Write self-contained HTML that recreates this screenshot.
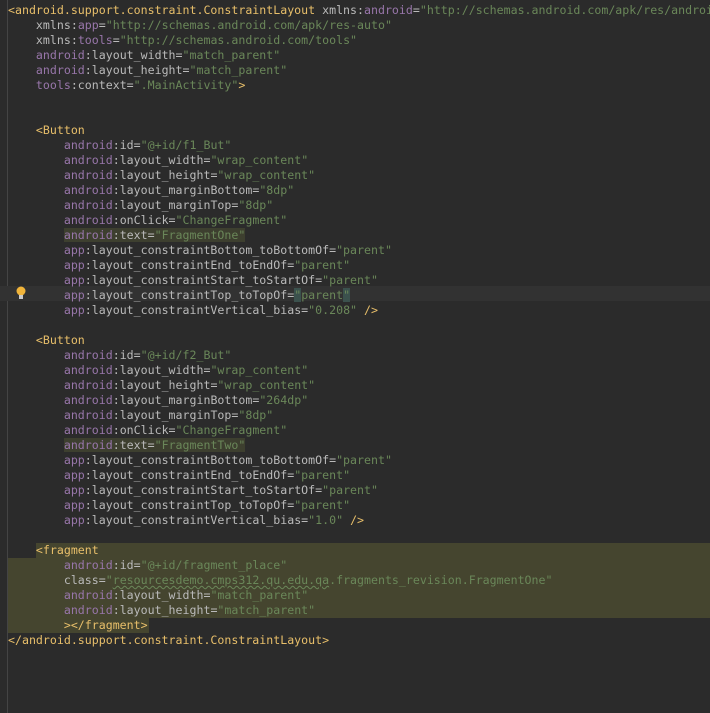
<!DOCTYPE html>
<html><head><meta charset="utf-8"><style>
html,body{margin:0;padding:0;background:#2b2b2b;width:710px;height:713px;overflow:hidden;position:relative}
.l{position:absolute;left:8px;height:15px;line-height:15px;font-family:"DejaVu Sans Mono","Liberation Mono",monospace;font-size:11.6px;color:#bababa;white-space:pre}
.t{color:#e8bf6a}.n{color:#9876aa}.v{color:#6a8759}
.hl{background:#3d3f2f}
.sq{text-decoration:underline wavy #6a8759;text-decoration-thickness:1px}
</style></head><body>
<div style="position:absolute;left:7px;top:0;width:1px;height:713px;background:#444"></div>
<div style="position:absolute;left:0;top:286px;width:710px;height:15px;background:#323232"></div>
<div style="position:absolute;left:36px;top:543px;width:674px;height:15px;background:#45452f"></div>
<div style="position:absolute;left:8px;top:558px;width:702px;height:60px;background:#45452f"></div>
<div style="position:absolute;left:8px;top:618px;width:141px;height:15px;background:#45452f"></div>
<div style="position:absolute;left:16px;top:286px;width:10px;height:14px;"><svg width="10" height="14"><circle cx="5" cy="5" r="4.5" fill="#f0b43a"/><rect x="3" y="9" width="4" height="4" fill="#c9c9c9"/></svg></div>
<div class="l" style="top:3px"><span class="t">&lt;android.support.constraint.ConstraintLayout </span>xmlns:<span class="n">android</span>=<span class="v">"http://schemas.android.com/apk/res/android"</span></div>
<div class="l" style="top:18px">    xmlns:<span class="n">app</span>=<span class="v">"http://schemas.android.com/apk/res-auto"</span></div>
<div class="l" style="top:33px">    xmlns:<span class="n">tools</span>=<span class="v">"http://schemas.android.com/tools"</span></div>
<div class="l" style="top:48px">    <span class="n">android</span>:layout_width=<span class="v">"match_parent"</span></div>
<div class="l" style="top:63px">    <span class="n">android</span>:layout_height=<span class="v">"match_parent"</span></div>
<div class="l" style="top:78px">    <span class="n">tools</span>:context=<span class="v">".MainActivity"</span><span class="t">&gt;</span></div>
<div class="l" style="top:123px">    <span class="t">&lt;Button</span></div>
<div class="l" style="top:138px">        <span class="n">android</span>:id=<span class="v">"@+id/f1_But"</span></div>
<div class="l" style="top:153px">        <span class="n">android</span>:layout_width=<span class="v">"wrap_content"</span></div>
<div class="l" style="top:168px">        <span class="n">android</span>:layout_height=<span class="v">"wrap_content"</span></div>
<div class="l" style="top:183px">        <span class="n">android</span>:layout_marginBottom=<span class="v">"8dp"</span></div>
<div class="l" style="top:198px">        <span class="n">android</span>:layout_marginTop=<span class="v">"8dp"</span></div>
<div class="l" style="top:213px">        <span class="n">android</span>:onClick=<span class="v">"ChangeFragment"</span></div>
<div class="l" style="top:228px">        <span class="hl"><span class="n">android</span>:text=<span class="v">"FragmentOne"</span></span></div>
<div class="l" style="top:243px">        <span class="n">app</span>:layout_constraintBottom_toBottomOf=<span class="v">"parent"</span></div>
<div class="l" style="top:258px">        <span class="n">app</span>:layout_constraintEnd_toEndOf=<span class="v">"parent"</span></div>
<div class="l" style="top:273px">        <span class="n">app</span>:layout_constraintStart_toStartOf=<span class="v">"parent"</span></div>
<div class="l" style="top:288px">        <span class="n">app</span>:layout_constraintTop_toTopOf=<span class="v"><span style="background:#3b514d">"</span>parent<span style="background:#3b514d">"</span></span></div>
<div class="l" style="top:303px">        <span class="n">app</span>:layout_constraintVertical_bias=<span class="v">"0.208"</span> <span class="t">/&gt;</span></div>
<div class="l" style="top:333px">    <span class="t">&lt;Button</span></div>
<div class="l" style="top:348px">        <span class="n">android</span>:id=<span class="v">"@+id/f2_But"</span></div>
<div class="l" style="top:363px">        <span class="n">android</span>:layout_width=<span class="v">"wrap_content"</span></div>
<div class="l" style="top:378px">        <span class="n">android</span>:layout_height=<span class="v">"wrap_content"</span></div>
<div class="l" style="top:393px">        <span class="n">android</span>:layout_marginBottom=<span class="v">"264dp"</span></div>
<div class="l" style="top:408px">        <span class="n">android</span>:layout_marginTop=<span class="v">"8dp"</span></div>
<div class="l" style="top:423px">        <span class="n">android</span>:onClick=<span class="v">"ChangeFragment"</span></div>
<div class="l" style="top:438px">        <span class="hl"><span class="n">android</span>:text=<span class="v">"FragmentTwo"</span></span></div>
<div class="l" style="top:453px">        <span class="n">app</span>:layout_constraintBottom_toBottomOf=<span class="v">"parent"</span></div>
<div class="l" style="top:468px">        <span class="n">app</span>:layout_constraintEnd_toEndOf=<span class="v">"parent"</span></div>
<div class="l" style="top:483px">        <span class="n">app</span>:layout_constraintStart_toStartOf=<span class="v">"parent"</span></div>
<div class="l" style="top:498px">        <span class="n">app</span>:layout_constraintTop_toTopOf=<span class="v">"parent"</span></div>
<div class="l" style="top:513px">        <span class="n">app</span>:layout_constraintVertical_bias=<span class="v">"1.0"</span> <span class="t">/&gt;</span></div>
<div class="l" style="top:543px">    <span class="t">&lt;fragment</span></div>
<div class="l" style="top:558px">        <span class="n">android</span>:id=<span class="v">"@+id/fragment_place"</span></div>
<div class="l" style="top:573px">        class=<span class="v">"<span class="sq">resourcesdemo.cmps312.qu.edu.qa</span>.fragments_revision.FragmentOne"</span></div>
<div class="l" style="top:588px">        <span class="n">android</span>:layout_width=<span class="v">"match_parent"</span></div>
<div class="l" style="top:603px">        <span class="n">android</span>:layout_height=<span class="v">"match_parent"</span></div>
<div class="l" style="top:618px">        <span class="t">&gt;&lt;/fragment&gt;</span></div>
<div class="l" style="top:633px"><span class="t">&lt;/android.support.constraint.ConstraintLayout&gt;</span></div>
</body></html>
